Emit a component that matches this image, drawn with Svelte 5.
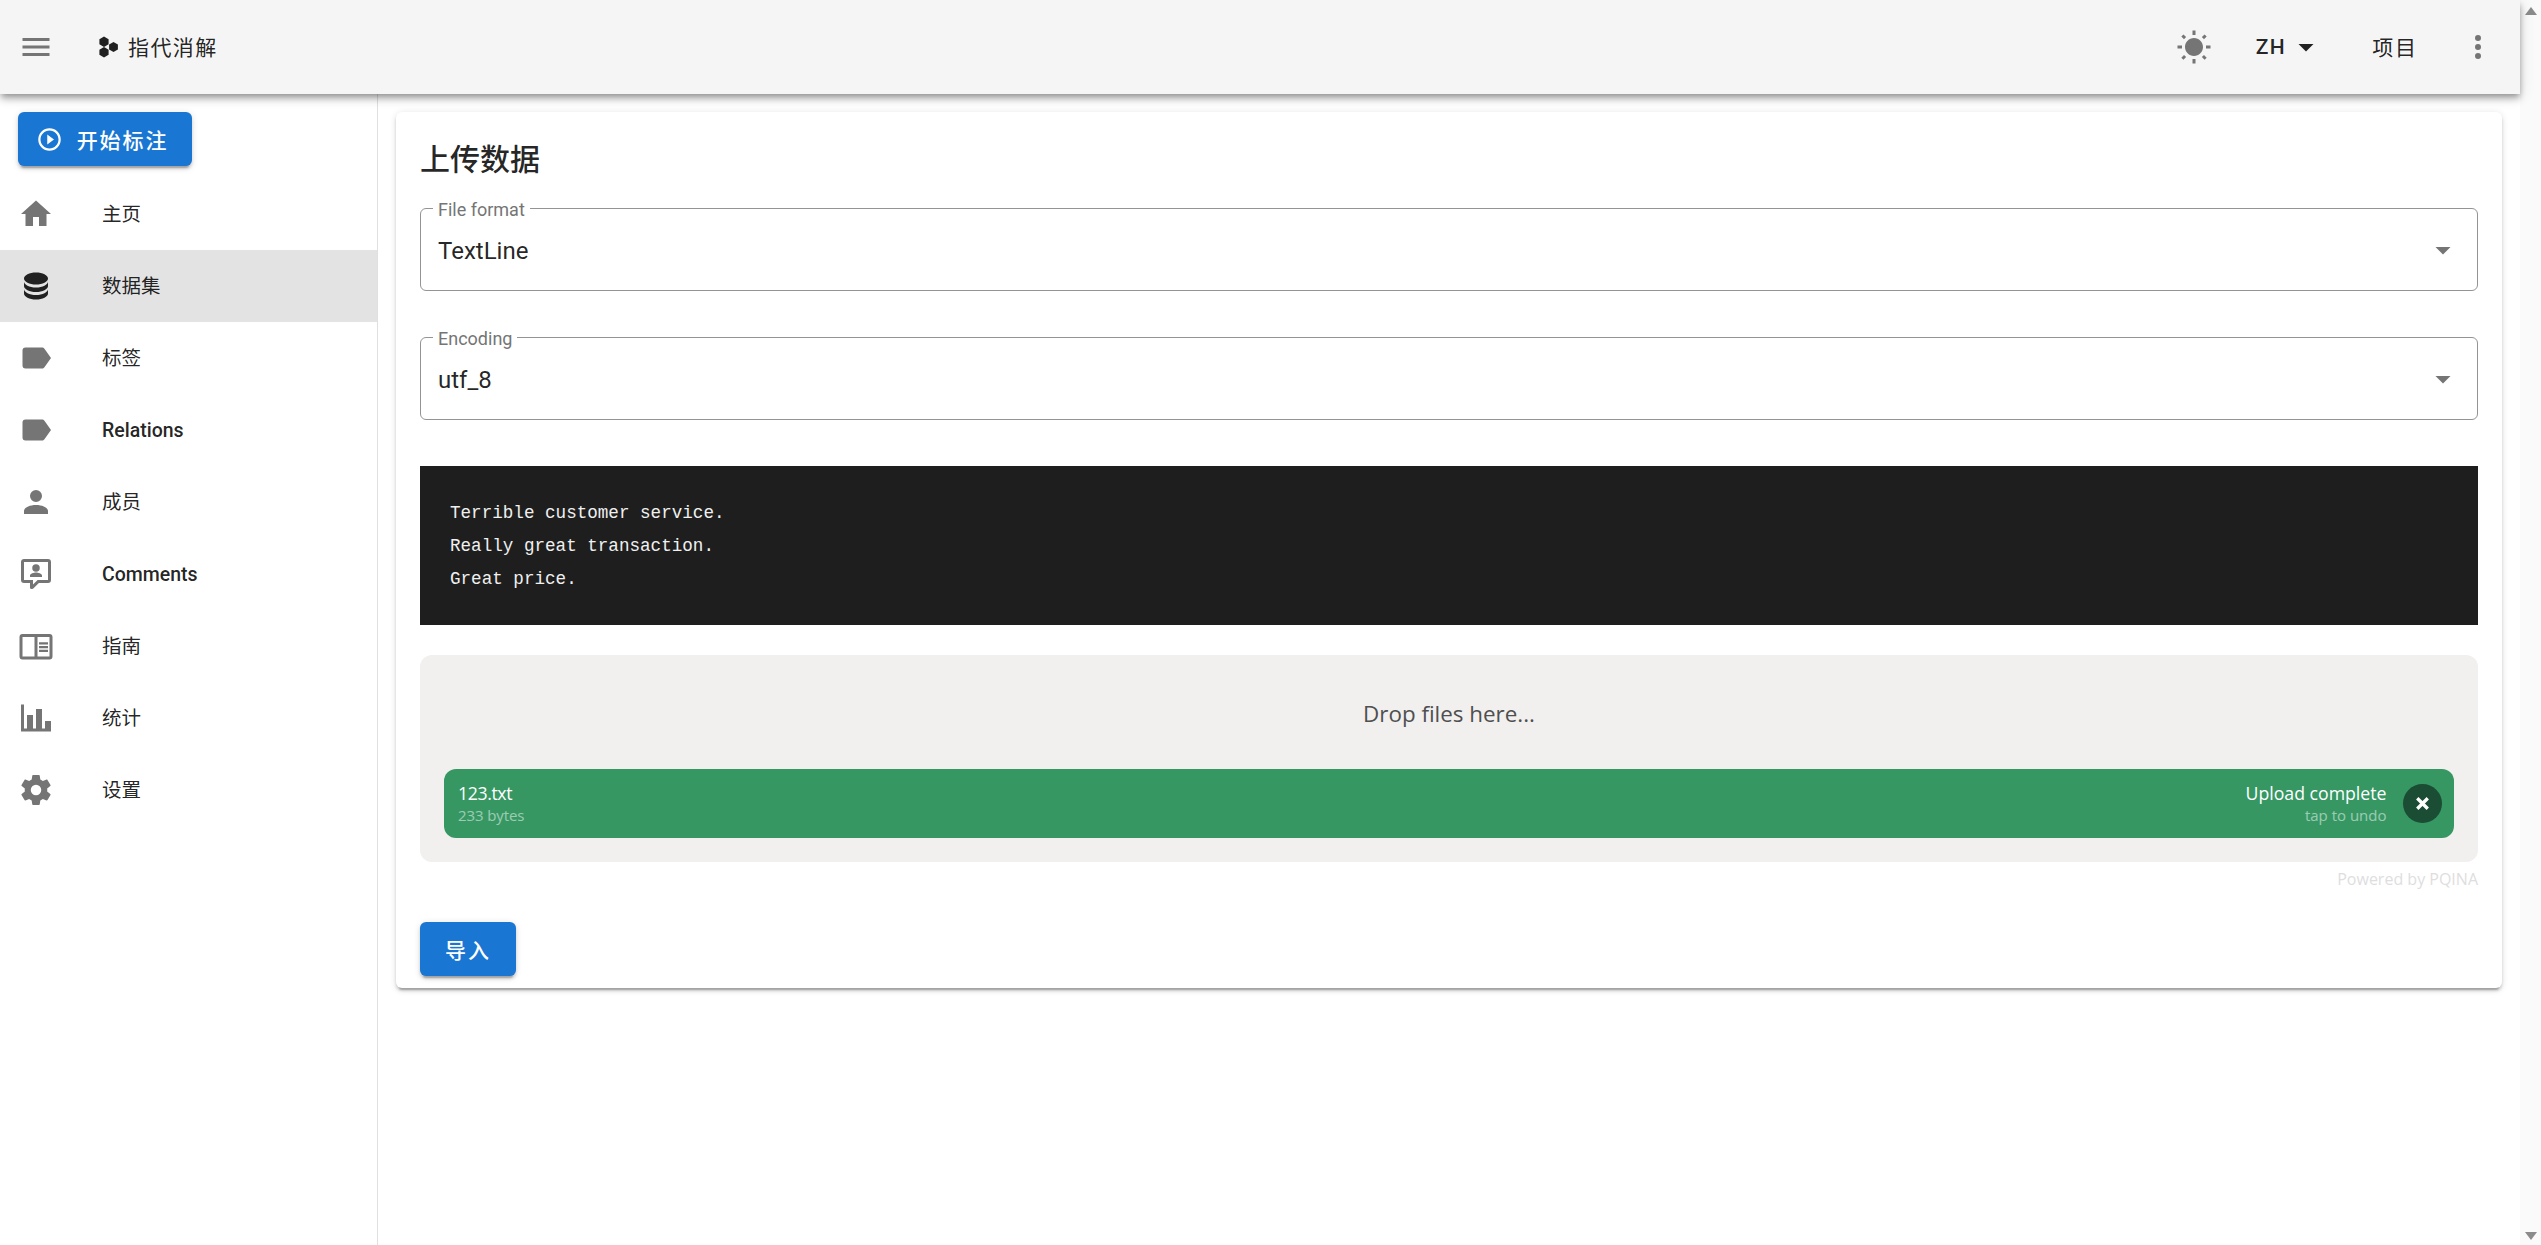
<script>
  const nav = [
    { label: '主页', d: 'M10,20V14H14V20H19V12H22L12,3L2,12H5V20H10Z' },
    { label: '数据集', active: true, d: 'M12,3C7.58,3 4,4.79 4,7C4,9.21 7.58,11 12,11C16.42,11 20,9.21 20,7C20,4.79 16.42,3 12,3M4,9V12C4,14.21 7.58,16 12,16C16.42,16 20,14.21 20,12V9C20,11.21 16.42,13 12,13C7.58,13 4,11.21 4,9M4,14V17C4,19.21 7.58,21 12,21C16.42,21 20,19.21 20,17V14C20,16.21 16.42,18 12,18C7.58,18 4,16.21 4,14Z' },
    { label: '标签', d: 'M17.63,5.84C17.27,5.33 16.67,5 16,5H5A2,2 0 0,0 3,7V17A2,2 0 0,0 5,19H16C16.67,19 17.27,18.66 17.63,18.15L22,12L17.63,5.84Z' },
    { label: 'Relations', latin: true, d: 'M17.63,5.84C17.27,5.33 16.67,5 16,5H5A2,2 0 0,0 3,7V17A2,2 0 0,0 5,19H16C16.67,19 17.27,18.66 17.63,18.15L22,12L17.63,5.84Z' },
    { label: '成员', d: 'M12,4A4,4 0 0,1 16,8A4,4 0 0,1 12,12A4,4 0 0,1 8,8A4,4 0 0,1 12,4M12,14C16.42,14 20,15.79 20,18V20H4V18C4,15.79 7.58,14 12,14Z' },
    { label: 'Comments', latin: true, d: 'M4,2H20A2,2 0 0,1 22,4V16A2,2 0 0,1 20,18H13.9L10.2,21.71C10,21.9 9.75,22 9.5,22H9A1,1 0 0,1 8,21V18H4A2,2 0 0,1 2,16V4C2,2.89 2.9,2 4,2M4,4V16H10V19.08L13.08,16H20V4H4M16,14H8V13C8,11.67 10.67,11 12,11C13.33,11 16,11.67 16,13V14M12,5.5A2.5,2.5 0 0,1 14.5,8A2.5,2.5 0 0,1 12,10.5A2.5,2.5 0 0,1 9.5,8A2.5,2.5 0 0,1 12,5.5Z' },
    { label: '指南', d: 'M21,4H3A2,2 0 0,0 1,6V19A2,2 0 0,0 3,21H21A2,2 0 0,0 23,19V6A2,2 0 0,0 21,4M3,19V6H11V19H3M21,19H13V6H21V19M14,9.5H20V11H14V9.5M14,12H20V13.5H14V12M14,14.5H20V16H14V14.5Z' },
    { label: '统计', d: 'M22,21H2V3H4V19H6V10H10V19H12V6H16V19H18V14H22V21Z' },
    { label: '设置', d: 'M12,15.5A3.5,3.5 0 0,1 8.5,12A3.5,3.5 0 0,1 12,8.5A3.5,3.5 0 0,1 15.5,12A3.5,3.5 0 0,1 12,15.5M19.43,12.97C19.47,12.65 19.5,12.33 19.5,12C19.5,11.67 19.47,11.34 19.43,11L21.54,9.37C21.73,9.22 21.78,8.95 21.66,8.73L19.66,5.27C19.54,5.05 19.27,4.96 19.05,5.05L16.56,6.05C16.04,5.66 15.5,5.32 14.87,5.07L14.5,2.42C14.46,2.18 14.25,2 14,2H10C9.75,2 9.54,2.18 9.5,2.42L9.13,5.07C8.5,5.32 7.96,5.66 7.44,6.05L4.95,5.05C4.73,4.96 4.46,5.05 4.34,5.27L2.34,8.73C2.21,8.95 2.27,9.22 2.46,9.37L4.57,11C4.53,11.34 4.5,11.67 4.5,12C4.5,12.33 4.53,12.65 4.57,12.97L2.46,14.63C2.27,14.78 2.21,15.05 2.34,15.27L4.34,18.73C4.46,18.95 4.73,19.03 4.95,18.95L7.44,17.94C7.96,18.34 8.5,18.68 9.13,18.93L9.5,21.58C9.54,21.82 9.75,22 10,22H14C14.25,22 14.46,21.82 14.5,21.58L14.87,18.93C15.5,18.67 16.04,18.34 16.56,17.94L19.05,18.95C19.27,19.03 19.54,18.95 19.66,18.73L21.66,15.27C21.78,15.05 21.73,14.78 21.54,14.63L19.43,12.97Z' }
  ];
  const fields = [
    { label: 'File format', value: 'TextLine' },
    { label: 'Encoding', value: 'utf_8' }
  ];
  const menuDown = 'M7,10L12,15L17,10H7Z';
  const lines = ['Terrible customer service.', 'Really great transaction.', 'Great price.'];
</script>

<div class="page">
  <div class="window">
    <header class="topbar">
      <svg class="icon" viewBox="0 0 24 24"><path d="M3,6H21V8H3V6M3,11H21V13H3V11M3,16H21V18H3V16Z" /></svg>
      <svg class="logo" viewBox="0 0 21 22">
        <polygon points="6,0.5 10.6,3.2 10.6,8.3 6,11 1.4,8.3 1.4,3.2" />
        <polygon points="15.5,6 19.9,8.5 19.9,13.5 15.5,16 11.1,13.5 11.1,8.5" />
        <polygon points="6,11 10.6,13.7 10.6,18.8 6,21.5 1.4,18.8 1.4,13.7" />
      </svg>
      <span class="brand">指代消解</span>
      <span class="spacer"></span>
      <svg class="icon" viewBox="0 0 24 24"><path d="M3.55,19.09L4.96,20.5L6.76,18.71L5.34,17.29M12,6C8.69,6 6,8.69 6,12S8.69,18 12,18,18,15.31,18,12C18,8.68 15.31,6 12,6M20,13H23V11H20M17.24,18.71L19.04,20.5L20.45,19.09L18.66,17.29M20.45,5L19.04,3.6L17.24,5.39L18.66,6.81M13,1H11V4H13M6.76,5.39L4.96,3.6L3.55,5L5.34,6.81L6.76,5.39M1,11V13H4V11M13,20H11V23H13" /></svg>
      <span class="lang">ZH</span>
      <svg class="icon caret" viewBox="0 0 24 24"><path d={menuDown} /></svg>
      <span class="projects">项目</span>
      <svg class="icon dots" viewBox="0 0 24 24"><path d="M12,16A2,2 0 0,1 14,18A2,2 0 0,1 12,20A2,2 0 0,1 10,18A2,2 0 0,1 12,16M12,10A2,2 0 0,1 14,12A2,2 0 0,1 12,14A2,2 0 0,1 10,12A2,2 0 0,1 12,10M12,4A2,2 0 0,1 14,6A2,2 0 0,1 12,8A2,2 0 0,1 10,6A2,2 0 0,1 12,4Z" /></svg>
    </header>

    <div class="body">
      <aside class="sidebar">
        <div class="start-wrap">
          <button class="btn start">
            <svg class="play" viewBox="0 0 24 24"><path d="M10,16.5L16,12L10,7.5V16.5M12,2A10,10 0 0,0 2,12A10,10 0 0,0 12,22A10,10 0 0,0 22,12A10,10 0 0,0 12,2M12,20C7.59,20 4,16.41 4,12C4,7.59 7.59,4 12,4C16.41,4 20,7.59 20,12C20,16.41 16.41,20 12,20Z" /></svg>
            开始标注
          </button>
        </div>
        <nav>
          {#each nav as item}
            <div class="nav-item" class:active={item.active}>
              <svg class="icon" viewBox="0 0 24 24"><path d={item.d} /></svg>
              <span class="nav-label" class:latin={item.latin}>{item.label}</span>
            </div>
          {/each}
        </nav>
      </aside>

      <main class="main">
        <section class="card">
          <h1>上传数据</h1>
          {#each fields as f}
            <fieldset class="field">
              <legend>{f.label}</legend>
              <span class="value">{f.value}</span>
              <svg class="icon" viewBox="0 0 24 24"><path d={menuDown} /></svg>
            </fieldset>
          {/each}
          <pre class="code">{#each lines as l}<code>{l}</code>{/each}</pre>
          <div class="pond">
            <div class="drop-label">Drop files here...</div>
            <div class="file">
              <div class="file-info">
                <span class="main-t">123.txt</span>
                <span class="sub-t">233 bytes</span>
              </div>
              <div class="file-status">
                <span class="main-t">Upload complete</span>
                <span class="sub-t">tap to undo</span>
              </div>
              <span class="undo">
                <svg viewBox="0 0 26 26"><path d="M9.5 9.5 L16.5 16.5 M16.5 9.5 L9.5 16.5" /></svg>
              </span>
            </div>
          </div>
          <div class="credit">Powered by PQINA</div>
          <button class="btn import">导入</button>
        </section>
      </main>
    </div>
  </div>

  <div class="scrollbar">
    <span class="arrow up"></span>
    <span class="arrow down"></span>
  </div>
</div>

<style>
  :global(body) {
    margin: 0;
    overflow: hidden;
    background: #fff;
  }
  .page {
    display: flex;
    width: 2541px;
    height: 1245px;
    overflow: hidden;
    font-family: Roboto, "Noto Sans CJK SC", sans-serif;
    color: rgba(0, 0, 0, 0.87);
  }
  .window {
    width: 2520px;
    display: flex;
    flex-direction: column;
  }
  .scrollbar {
    width: 21px;
    background: #fafafa;
    display: flex;
    flex-direction: column;
    justify-content: space-between;
    align-items: center;
    padding: 7px 0 5px;
    box-sizing: border-box;
  }
  .arrow {
    width: 0;
    height: 0;
    border-left: 6px solid transparent;
    border-right: 6px solid transparent;
  }
  .arrow.up { border-bottom: 8px solid #8b8b8b; }
  .arrow.down { border-top: 8px solid #8b8b8b; }

  .icon {
    width: 36px;
    height: 36px;
    fill: #757575;
    flex: none;
    display: block;
  }
  .topbar {
    height: 94px;
    flex: none;
    background: #f5f5f5;
    display: flex;
    align-items: center;
    padding-left: 18px;
    position: relative;
    z-index: 2;
    box-shadow: 0 3px 6px -1.5px rgba(0, 0, 0, 0.3), 0 6px 7px 0 rgba(0, 0, 0, 0.14), 0 1.5px 15px 0 rgba(0, 0, 0, 0.12);
  }
  .logo {
    width: 21px;
    height: 22px;
    margin-left: 44px;
    fill: #212121;
  }
  .brand {
    margin-left: 9px;
    padding-bottom: 3px;
    font-size: 21px;
    letter-spacing: 1.4px;
  }
  .spacer { flex: 1; }
  .lang {
    margin-left: 44px;
    font-size: 21px;
    font-weight: 500;
    letter-spacing: 1.5px;
  }
  .caret {
    margin-left: 2px;
    fill: #212121;
  }
  .projects {
    margin-left: 48px;
    padding-bottom: 3px;
    font-size: 21px;
    font-weight: 400;
    letter-spacing: 1.9px;
  }
  .dots { margin: 0 24px 0 42px; }

  .body {
    flex: 1;
    display: flex;
    min-height: 0;
  }
  .sidebar {
    width: 378px;
    flex: none;
    box-sizing: border-box;
    border-right: 1.5px solid #e0e0e0;
  }
  .start-wrap { padding: 18px 18px 12px; }
  .btn {
    display: inline-flex;
    align-items: center;
    justify-content: center;
    height: 54px;
    border: 0;
    border-radius: 6px;
    background: #1976d2;
    color: #fff;
    font-family: inherit;
    font-size: 21px;
    font-weight: 500;
    letter-spacing: 1.9px;
    box-shadow: 0 4.5px 1.5px -3px rgba(0, 0, 0, 0.2), 0 3px 3px 0 rgba(0, 0, 0, 0.14), 0 1.5px 7.5px 0 rgba(0, 0, 0, 0.12);
  }
  .start {
    width: 174px;
    padding: 0 6px 0 0;
  }
  .play {
    width: 27px;
    height: 27px;
    fill: #fff;
    margin-right: 14px;
  }
  .nav-item {
    height: 72px;
    display: flex;
    align-items: center;
    padding-left: 18px;
  }
  .nav-item.active { background: #e3e3e3; }
  .nav-item.active .icon { fill: #212121; }
  .nav-label {
    margin-left: 48px;
    padding-bottom: 3px;
    font-size: 19.5px;
    font-weight: 400;
  }
  .nav-label.latin {
    padding-bottom: 0;
    font-weight: 500;
  }

  .main {
    flex: 1;
    padding: 18px;
    min-width: 0;
  }
  .card {
    background: #fff;
    border-radius: 6px;
    padding: 0 24px 12px;
    height: 876px;
    box-sizing: border-box;
    box-shadow: 0 4.5px 1.5px -3px rgba(0, 0, 0, 0.2), 0 3px 3px 0 rgba(0, 0, 0, 0.14), 0 1.5px 7.5px 0 rgba(0, 0, 0, 0.12);
  }
  h1 {
    margin: 0;
    height: 96px;
    line-height: 95px;
    font-size: 30px;
    font-weight: 500;
  }
  .field {
    margin: 0 0 46px;
    padding: 0 17px;
    height: 83px;
    box-sizing: border-box;
    border: 1.5px solid #949494;
    border-radius: 6px;
    display: flex;
    align-items: center;
    justify-content: space-between;
  }
  legend {
    margin-left: -5px;
    padding: 0 5px;
    height: 0;
    line-height: 1px;
    font-size: 18px;
    color: #757575;
  }
  .value {
    font-size: 24px;
    position: relative;
    top: 1px;
  }
  .field .icon { margin-right: -1px; }
  .code {
    margin: 0;
    padding: 31px 30px 29px;
    background: #1e1e1e;
    color: #f0f0f0;
    font-family: "Liberation Mono", monospace;
    font-size: 17.6px;
    line-height: 33px;
  }
  .code code {
    display: block;
    font: inherit;
  }
  .pond {
    margin-top: 30px;
    height: 207px;
    box-sizing: border-box;
    padding: 0 24px;
    background: #f1f0ef;
    border-radius: 12px;
    font-family: "Open Sans", sans-serif;
  }
  .drop-label {
    height: 114px;
    display: flex;
    align-items: center;
    justify-content: center;
    padding-top: 2px;
    box-sizing: border-box;
    font-size: 22.4px;
    color: #4f4f4f;
  }
  .file {
    height: 69px;
    background: #369763;
    border-radius: 12px;
    display: flex;
    align-items: center;
    color: #fff;
    padding: 0 12.5px 0 14px;
  }
  .file-info, .file-status {
    display: flex;
    flex-direction: column;
  }
  .file-info { flex: 1; }
  .file-info .main-t { letter-spacing: -0.4px; }
  .file-info .sub-t { letter-spacing: -0.1px; }
  .file-status {
    align-items: flex-end;
    margin-right: 16px;
  }
  .main-t {
    font-size: 17.7px;
    line-height: 23px;
  }
  .sub-t {
    font-size: 15px;
    line-height: 21px;
    opacity: 0.5;
  }
  .undo {
    width: 39px;
    height: 39px;
    border-radius: 50%;
    background: #1a4d33;
    display: block;
  }
  .undo svg {
    display: block;
    width: 39px;
    height: 39px;
    fill: none;
    stroke: #fff;
    stroke-width: 2.2;
  }
  .credit {
    height: 60px;
    padding-top: 6px;
    box-sizing: border-box;
    text-align: right;
    font-family: "Open Sans", sans-serif;
    font-size: 16px;
    line-height: 22px;
    color: #dedede;
  }
  .import {
    width: 96px;
    padding: 0;
  }
</style>
